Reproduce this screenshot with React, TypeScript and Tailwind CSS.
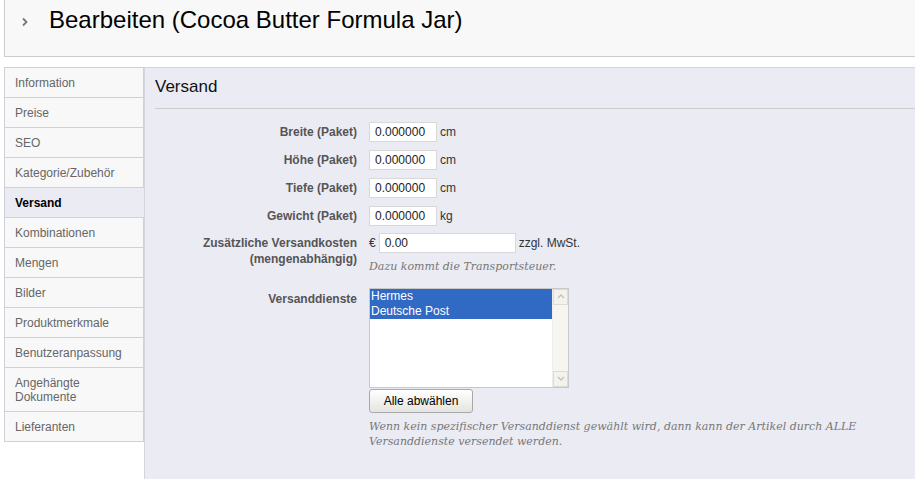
const tabs = [
  "Information",
  "Preise",
  "SEO",
  "Kategorie/Zubehör",
  "Versand",
  "Kombinationen",
  "Mengen",
  "Bilder",
  "Produktmerkmale",
  "Benutzeranpassung",
  "Angehängte Dokumente",
  "Lieferanten",
];

const dims = [
  { label: "Breite (Paket)", unit: "cm" },
  { label: "Höhe (Paket)", unit: "cm" },
  { label: "Tiefe (Paket)", unit: "cm" },
  { label: "Gewicht (Paket)", unit: "kg" },
];

const sans = "font-['Liberation_Sans',Arial,sans-serif]";
const serif = "font-['DejaVu_Serif',Georgia,serif]";

export default function App() {
  return (
    <div className={`min-h-[479px] w-[915px] overflow-hidden bg-white ${sans}`}>
      {/* page header */}
      <div className="ml-[4px] flex h-[57px] items-start border-b border-l border-[#cccccc] bg-[#f8f8f8] pt-[5px]">
        <svg className="ml-[16px] mt-[12px]" width="8" height="10" viewBox="0 0 8 10">
          <path d="M2 1.5 L5.5 5 L2 8.5" fill="none" stroke="#777" strokeWidth="1.8" />
        </svg>
        <h1 className="ml-[20px] text-[24px] leading-[30px] text-black">
          Bearbeiten (Cocoa Butter Formula Jar)
        </h1>
      </div>

      <div className="mt-[10px] flex">
        {/* tab list */}
        <div className="ml-[4px] flex w-[140px] flex-col">
          {tabs.map((t) => {
            const active = t === "Versand";
            return (
              <div
                key={t}
                className={
                  active
                    ? "border-b border-l border-[#d0d0da] bg-[#ebebf3] pb-[7px] pt-[8px] pl-[10px] text-[12px] leading-[14px] font-bold text-black"
                    : "border-b border-l border-r border-[#d0d0da] bg-[#f8f8f8] pb-[7px] pt-[8px] pl-[10px] pr-[4px] text-[12px] leading-[14px] text-[#666666] first:border-t"
                }
              >
                {t}
              </div>
            );
          })}
        </div>

        {/* panel */}
        <div className="min-h-[412px] flex-1 border-l border-t border-[#d4d4de] bg-[#ebebf3] pl-[10px]">
          <h2 className="pt-[8px] text-[17px] leading-[22px] text-[#111]">Versand</h2>
          <div className="mt-[10px] border-b border-[#cccccc]" />

          <div className="mt-[13px] flex flex-col gap-[8px]">
            {dims.map((d) => (
              <div key={d.label} className="flex items-center">
                <div className="w-[214px] pr-[12px] text-right text-[12px] font-bold text-[#555]">{d.label}</div>
                <div className="h-[20px] w-[68px] border border-[#d8d8d8] bg-white pl-[5px] text-[12px] leading-[18px] text-[#222]">
                  0.000000
                </div>
                <span className="ml-[3px] text-[12px] text-[#333]">{d.unit}</span>
              </div>
            ))}
          </div>

          <div className="mt-[7px] flex">
            <div className="w-[214px] pr-[12px] pt-[2px] text-right text-[12px] leading-[16px] font-bold text-[#555]">
              Zusätzliche Versandkosten
              <br />
              (mengenabhängig)
            </div>
            <div className="flex flex-col">
              <div className="flex items-center">
                <span className="text-[12px] text-[#333]">€</span>
                <div className="ml-[3px] h-[20px] w-[137px] border border-[#d8d8d8] bg-white pl-[5px] text-[12px] leading-[18px] text-[#222]">
                  0.00
                </div>
                <span className="ml-[3px] text-[12px] text-[#333]">zzgl. MwSt.</span>
              </div>
              <p className={`${serif} mt-[6px] text-[11px] italic text-[#777]`}>Dazu kommt die Transportsteuer.</p>
            </div>
          </div>

          <div className="mt-[12px] flex">
            <div className="w-[214px] pr-[12px] pt-[2px] text-right text-[12px] font-bold text-[#555]">Versanddienste</div>
            <div className="flex flex-col">
              <div className="flex h-[100px] w-[200px] border border-[#c8c8c8] bg-white">
                <div className="flex-1 text-[12px] leading-[15px] text-white">
                  <div className="bg-[#316ac5] pl-[1px]">Hermes</div>
                  <div className="bg-[#316ac5] pl-[1px]">Deutsche Post</div>
                </div>
                <div className="flex w-[16px] flex-col justify-between border-l border-[#eeeeea] bg-[#f6f5ef]">
                  <div className="flex h-[16px] items-center justify-center border border-[#dedbd0] bg-[#f3f2ec]">
                    <svg width="8" height="5" viewBox="0 0 8 5">
                      <path d="M1 4 L4 1 L7 4" fill="none" stroke="#c4c2b8" strokeWidth="1.3" />
                    </svg>
                  </div>
                  <div className="flex h-[16px] items-center justify-center border border-[#dedbd0] bg-[#f3f2ec]">
                    <svg width="8" height="5" viewBox="0 0 8 5">
                      <path d="M1 1 L4 4 L7 1" fill="none" stroke="#c4c2b8" strokeWidth="1.3" />
                    </svg>
                  </div>
                </div>
              </div>
              <button className="mt-[1px] h-[24px] w-[104px] rounded-[3px] border border-[#a8a8a8] bg-gradient-to-b from-[#ffffff] to-[#e4e4e0] text-[12px] text-black">
                Alle abwählen
              </button>
              <p className={`${serif} mt-[6px] w-[500px] text-[11px] leading-[15px] italic text-[#777]`}>
                Wenn kein spezifischer Versanddienst gewählt wird, dann kann der Artikel durch ALLE Versanddienste versendet
                werden.
              </p>
            </div>
          </div>
        </div>
      </div>
    </div>
  );
}
